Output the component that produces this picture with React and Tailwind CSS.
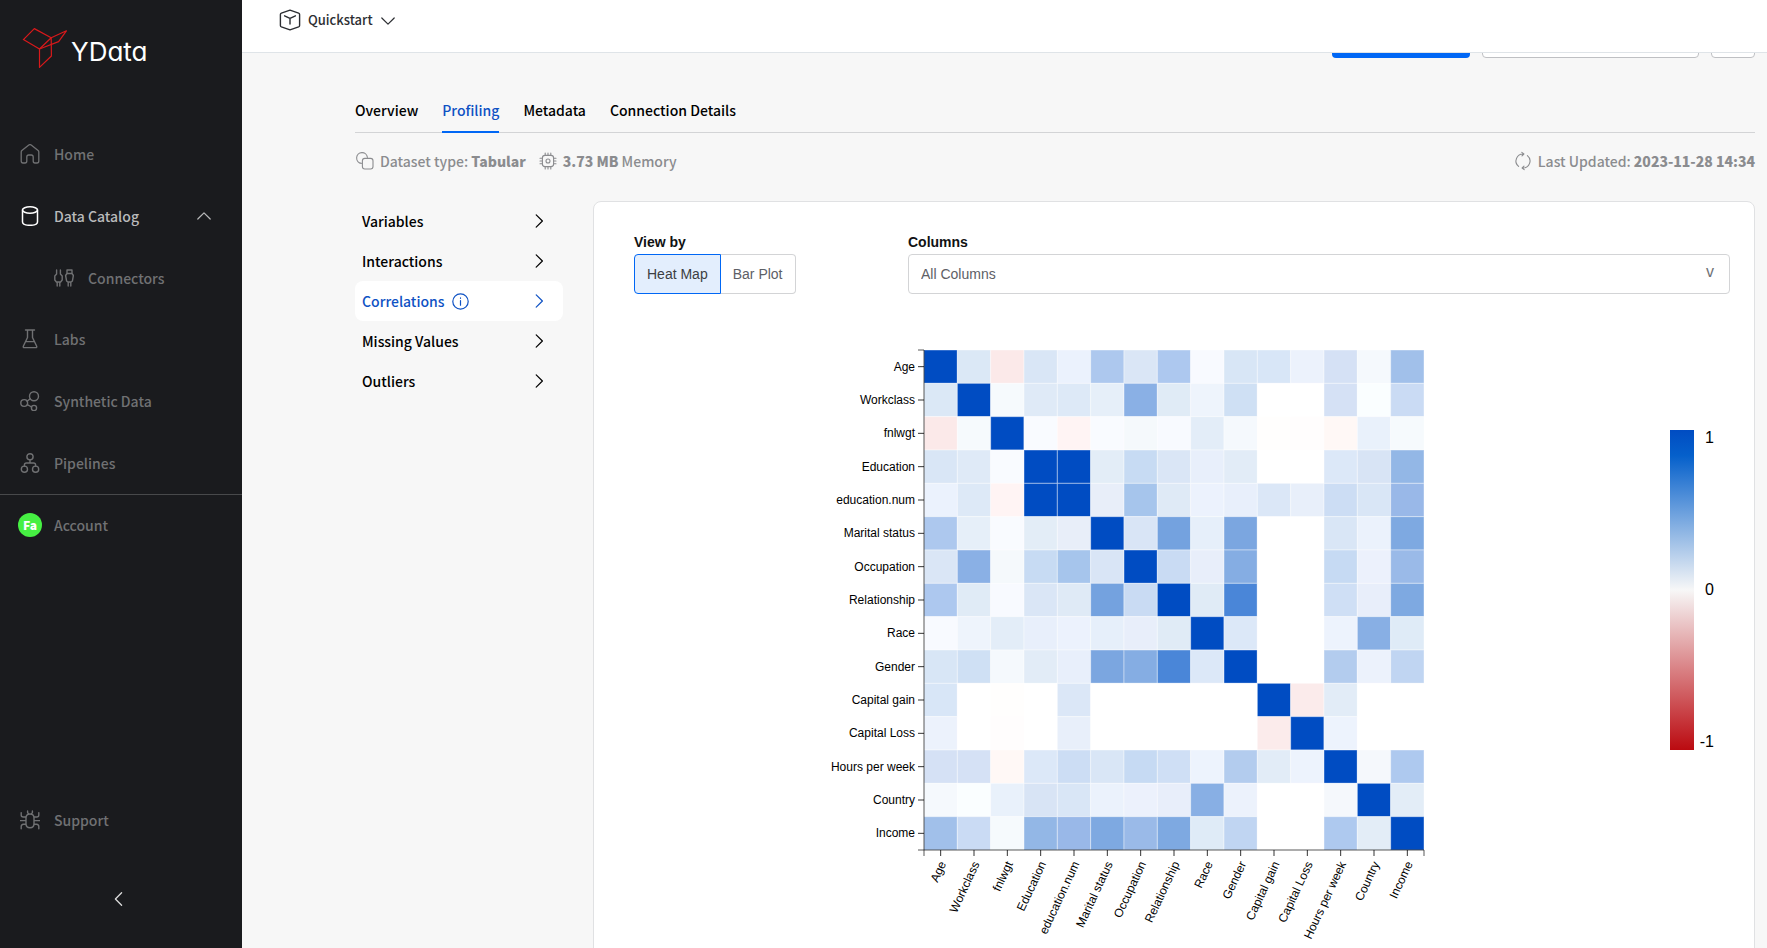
import React from "react";

const LABELS = [
  "Age", "Workclass", "fnlwgt", "Education", "education.num", "Marital status", "Occupation",
  "Relationship", "Race", "Gender", "Capital gain", "Capital Loss", "Hours per week", "Country", "Income",
];

// Upper triangle of the symmetric matrix: row i lists the cells right of the diagonal.
const UPPER = [
  ["dbe8f6", "fbe9e9", "d9e6f6", "ebf2fd", "adc8ee", "dae6f6", "adc8ef", "f8faff", "d8e6f6", "d8e6f7", "ecf2fc", "d5e1f5", "f5f9fd", "a1c0ea"],
  ["f6fafd", "dfeaf7", "dde9f7", "e6eff9", "8ab0e5", "e0ebf6", "eef4fc", "cfe0f4", "ffffff", "ffffff", "d5e1f5", "fafeff", "cadbf4"],
  ["f9fbff", "fff4f4", "f9fbff", "f5f9fc", "f8faff", "e3edf8", "f5f9fd", "fffefd", "fffdfd", "fff8f6", "e9f1fb", "f6fafd"],
  ["004cc2", "e3edf7", "c7dbf3", "dae6f6", "e8effb", "e2ecf7", "ffffff", "ffffff", "dce8f8", "d8e4f5", "93b7e6"],
  ["e8eef9", "a6c5ec", "dfeaf6", "ecf2fd", "e8effb", "dbe7f7", "e8effa", "ccddf4", "d9e6f6", "99b8e8"],
  ["d9e5f6", "74a2df", "e6effa", "7ba6e0", "ffffff", "ffffff", "d9e6f6", "ebf2fc", "7ea9e1"],
  ["c9dbf3", "e8eefa", "85ade3", "ffffff", "ffffff", "c6daf3", "ecf1fc", "9abae8"],
  ["e0ebf6", "4a86d8", "ffffff", "ffffff", "cfdff5", "e8eefa", "7ea9e1"],
  ["dce8f8", "ffffff", "ffffff", "edf3fd", "88afe4", "dfebf7"],
  ["ffffff", "ffffff", "b3ccee", "ecf2fc", "c0d5f2"],
  ["fbebeb", "e2ecf7", "ffffff", "ffffff"],
  ["edf3fd", "ffffff", "ffffff"],
  ["f5f8fc", "aec9ef"],
  ["e3edf7"],
];

function cellColor(r, c) {
  if (r === c) return "#004cc2";
  const a = Math.min(r, c);
  const b = Math.max(r, c);
  return "#" + UPPER[a][b - a - 1];
}

function Icon({ size = 20, box = 20, stroke = 1.2, className = "", children }) {
  return (
    <svg
      width={size}
      height={size}
      viewBox={`0 0 ${box} ${box}`}
      fill="none"
      stroke="currentColor"
      strokeWidth={stroke}
      strokeLinecap="round"
      strokeLinejoin="round"
      className={"shrink-0 " + className}
      aria-hidden="true"
    >
      {children}
    </svg>
  );
}

const HomeIcon = () => (
  <Icon stroke={1.3}>
    <path d="M1.2 8 Q1.2 7.2 1.9 6.6 L8.8 1 Q10 .2 11.2 1 L18.1 6.6 Q18.8 7.2 18.8 8 V17 Q18.8 19 17 19 H15 Q13.2 19 13.2 17 V13 Q13.2 11 11.2 11 H8.8 Q6.8 11 6.8 13 V17 Q6.8 19 5 19 H3 Q1.2 19 1.2 17 Z" />
  </Icon>
);
const DatabaseIcon = () => (
  <Icon stroke={1.5}>
    <ellipse cx="10" cy="4" rx="7.5" ry="3.2" />
    <path d="M2.5 4 V16 C2.5 20.4 17.5 20.4 17.5 16 V4" />
  </Icon>
);
const ConnectorsIcon = () => (
  <Icon stroke={1.4}>
    <path d="M2.6 2 V6 L.8 8 V12 L2.4 14 H6.6 L8.2 12 V8 L6.4 6 V2 M3.2 14 V18 M5.8 14 V18" />
    <path d="M13 2 H18 V5.5 H13 Z M13 5.5 L11.6 7.5 L12.6 13 L13.8 14 H17.2 L18.4 13 L19.4 7.5 L18 5.5 M14.2 14 V18 M16.8 14 V18" />
  </Icon>
);
const FlaskIcon = () => (
  <Icon stroke={1.4}>
    <path d="M5.5 1 H14.5 M7.5 1 V8.5 L3.3 17.2 Q3 18.6 4.2 18.6 H15.8 Q17 18.6 16.7 17.2 L12.5 8.5 V1 M5.8 12.6 H14.2" />
  </Icon>
);
const ShareIcon = () => (
  <Icon stroke={1.4}>
    <circle cx="14" cy="5.2" r="4.5" />
    <circle cx="4.2" cy="12" r="3.4" />
    <circle cx="14" cy="17" r="2.6" />
    <path d="M7.1 10.2 L10.2 7.7 M7.3 13.6 L11.6 16" />
  </Icon>
);
const PipelineIcon = () => (
  <Icon stroke={1.4}>
    <circle cx="10" cy="3.8" r="3.1" />
    <circle cx="4.4" cy="16.2" r="3.1" />
    <circle cx="15.6" cy="16.2" r="3.1" />
    <path d="M10 6.9 V10 M4.4 13 V12 Q4.4 10 6.4 10 H13.6 Q15.6 10 15.6 12 V13" />
  </Icon>
);
const BugIcon = () => (
  <Icon stroke={1.4}>
    <path d="M6 8 Q6 4 10 4 Q14 4 14 8 V13.5 Q14 17.8 10 17.8 Q6 17.8 6 13.5 Z M7.6 1 V2.6 L8.6 4 M12.4 1 V2.6 L11.4 4 M1.2 2.6 V5 Q1.2 7 3.2 7 H6 M18.8 2.6 V5 Q18.8 7 16.8 7 H14 M.4 10.6 H6 M14 10.6 H19.6 M1.2 18.8 V16.6 Q1.2 14.4 3.4 14.2 H6 M18.8 18.8 V16.6 Q18.8 14.4 16.6 14.2 H14" />
  </Icon>
);

const NAV = [
  { label: "Home", icon: HomeIcon },
  { label: "Data Catalog", icon: DatabaseIcon, active: true },
  { label: "Connectors", icon: ConnectorsIcon, sub: true },
  { label: "Labs", icon: FlaskIcon },
  { label: "Synthetic Data", icon: ShareIcon },
  { label: "Pipelines", icon: PipelineIcon },
];

function NavItem({ label, icon: Glyph, active, sub }) {
  return (
    <a
      href="#"
      className={
        "flex flex-1 items-center pr-[30px] " +
        (sub ? "gap-3 pl-[52px] " : "gap-3 pl-[18px] ") +
        (active ? "text-[#b9babb]" : "text-[#707173]")
      }
    >
      <span className={"flex w-6 justify-center " + (active ? "text-white" : "")}>
        <Glyph />
      </span>
      <span className="flex-1">{label}</span>
      {active && (
        <Icon size={16} box={16} stroke={1.2}>
          <path d="M1.8 11 L8 4.8 L14.2 11" />
        </Icon>
      )}
    </a>
  );
}

function Sidebar() {
  return (
    <aside className="flex w-[242px] shrink-0 flex-col bg-[#1a1b1e] text-sm font-medium">
      <div className="flex h-[123px] shrink-0 gap-1 pt-[26px] pl-[22px]">
        <svg width="45" height="44" viewBox="22 26 45 44" fill="none" stroke="#d8191b" strokeWidth="1.2" strokeLinejoin="round" aria-hidden="true">
          <path d="M34.3 28.6 L51.2 37.8 L66.4 30.8 L58.6 41.6 L39.5 49 L23.4 39.6 Z" />
          <path d="M51.2 37.8 L39.5 49 V67.4 L51.4 56 Z" />
        </svg>
        <span className="pt-2 text-[26px] leading-[36px] font-normal text-white font-[Inter,sans-serif] [font-feature-settings:'cv11']">
          YData
        </span>
      </div>
      <nav className="flex h-[371px] shrink-0 flex-col">
        {NAV.map((item) => (
          <NavItem key={item.label} {...item} />
        ))}
      </nav>
      <a href="#" className="flex h-[61px] shrink-0 items-center gap-3 border-t border-[#48494b] pl-[18px] text-[#707173]">
        <span className="flex size-6 items-center justify-center rounded-full bg-[#46f043] text-xs font-black text-white">Fa</span>
        Account
      </a>
      <div className="mt-auto flex h-[61px] shrink-0">
        <NavItem label="Support" icon={BugIcon} />
      </div>
      <button type="button" aria-label="Collapse sidebar" className="flex h-[98px] shrink-0 items-center pl-[111px] text-[#dcdcdc]">
        <Icon size={16} box={16} stroke={1.3}>
          <path d="M10.6 1.8 L4.4 8 L10.6 14.2" />
        </Icon>
      </button>
    </aside>
  );
}

function TopBar() {
  return (
    <header className="flex h-[53px] shrink-0 items-start border-b border-[#dfe4e8] bg-white pt-[10px] pl-[37px]">
      <button type="button" className="flex h-5 items-center gap-[7px] text-[13px] font-medium text-[#2c2e32]">
        <Icon size={22} box={22} stroke={1.4}>
          <path d="M11 1.2 L19.6 4.2 Q20.6 4.6 20.6 5.6 V16.4 Q20.6 17.4 19.6 17.8 L11 20.8 L2.4 17.8 Q1.4 17.4 1.4 16.4 V5.6 Q1.4 4.6 2.4 4.2 Z" />
          <path d="M5.6 6.8 L11 9.4 L16.4 6.8 M11 9.4 V15" />
        </Icon>
        Quickstart
        <Icon size={16} box={16} stroke={1.2}>
          <path d="M1.8 6 L8 12.2 L14.2 6" />
        </Icon>
      </button>
    </header>
  );
}

const TABS = ["Overview", "Profiling", "Metadata", "Connection Details"];

function Tabs() {
  return (
    <nav className="flex gap-6 border-b border-[#d3d4d6]">
      {TABS.map((t) => (
        <a
          key={t}
          href="#"
          className={
            "-mb-px flex h-11 items-center border-b-2 text-sm font-medium " +
            (t === "Profiling" ? "border-[#0067f5] text-[#0f52c4]" : "border-transparent text-black")
          }
        >
          {t}
        </a>
      ))}
    </nav>
  );
}

function MetaRow() {
  return (
    <div className="flex h-14 items-center text-sm font-medium text-[#8b8c8f]">
      <Icon stroke={1.1} className="mr-[5px]">
        <path d="M6.4 12.4 A5.4 5.4 0 1 1 12.4 6.4" />
        <rect x="7.4" y="7.4" width="10.6" height="10.6" rx="2.4" />
      </Icon>
      <span>
        Dataset type: <b className="font-black">Tabular</b>
      </span>
      <Icon stroke={1.1} className="mr-[5px] ml-3">
        <rect x="4.4" y="4.4" width="11.2" height="11.2" rx="2.6" />
        <circle cx="10" cy="10" r="2" />
        <path d="M7.2 2 V4.4 M10 2 V4.4 M12.8 2 V4.4 M7.2 15.6 V18 M10 15.6 V18 M12.8 15.6 V18 M2 7.2 H4.4 M2 10 H4.4 M2 12.8 H4.4 M15.6 7.2 H18 M15.6 10 H18 M15.6 12.8 H18" />
      </Icon>
      <span>
        <b className="font-black">3.73 MB</b> Memory
      </span>
      <span className="ml-auto flex items-center gap-[5px]">
        <Icon stroke={1.1}>
          <path d="M10.6 3 A7 7 0 0 0 5.6 15.4 M8.8 1.4 L10.9 3 L9 4.8" />
          <path d="M9.4 17 A7 7 0 0 0 14.4 4.6 M11.2 18.6 L9.1 17 L11 15.2" />
        </Icon>
        <span>
          Last Updated: <b className="font-black">2023-11-28 14:34</b>
        </span>
      </span>
    </div>
  );
}

const SECTIONS = ["Variables", "Interactions", "Correlations", "Missing Values", "Outliers"];

function SectionNav() {
  return (
    <nav className="flex w-[208px] shrink-0 flex-col text-sm font-medium">
      {SECTIONS.map((s) => (
        <a
          key={s}
          href="#"
          className={
            "flex h-10 items-center gap-[7px] rounded-lg pr-4 pl-[7px] " +
            (s === "Correlations" ? "bg-white text-[#0f52c4]" : "text-black")
          }
        >
          {s}
          {s === "Correlations" && (
            <Icon size={17} box={17} stroke={1.2}>
              <circle cx="8.5" cy="8.5" r="7.7" />
              <path d="M8.5 7.6 V12.2 M8.5 4.9 V5.3" />
            </Icon>
          )}
          <Icon size={16} box={16} stroke={1.2} className="ml-auto">
            <path d="M5.2 1.8 L11.4 8 L5.2 14.2" />
          </Icon>
        </a>
      ))}
    </nav>
  );
}

function HeatMap() {
  const step = 500 / LABELS.length;
  const ox = 110;
  const oy = 10;
  return (
    <svg width="720" height="600" viewBox="0 0 720 600" role="img" aria-label="Correlation heat map" className="font-['Liberation_Sans',Arial,sans-serif] text-xs">
      <g transform={`translate(${ox} ${oy})`}>
        {LABELS.map((_, r) =>
          LABELS.map((__, c) => (
            <rect key={r + "-" + c} x={c * step} y={r * step} width={step} height={step} fill={cellColor(r, c)} stroke="#ffffff" strokeOpacity="0.4" strokeWidth="1" />
          ))
        )}
        <g stroke="#000000" strokeOpacity="0.65" fill="none">
          <path d="M-6 0 H0 V500 H-6" />
          <path d="M0 506 V500 H500 V506" />
        </g>
        {LABELS.map((l, i) => {
          const p = (i + 0.5) * step;
          return (
            <g key={l}>
              <line x1="-6" x2="0" y1={p} y2={p} stroke="#000000" strokeOpacity="0.8" />
              <line y1="500" y2="506" x1={p} x2={p} stroke="#000000" strokeOpacity="0.8" />
              <text x="-9" y={p} dy="0.32em" textAnchor="end">{l}</text>
              <text transform={`translate(${p} 500) rotate(-65)`} x="-10" y="11" textAnchor="end">{l}</text>
            </g>
          );
        })}
      </g>
    </svg>
  );
}

function Legend() {
  return (
    <div className="mt-[90px] flex h-80 justify-end gap-1.5 text-base leading-4 text-black">
      <div className="w-6 bg-[linear-gradient(to_bottom,#004cc2_0%,#0560cb_8%,#f7f7f7_50%,#bb0a10_100%)]" />
      <div className="flex w-[14px] flex-col items-end justify-between">
        <span>1</span>
        <span>0</span>
        <span>-1</span>
      </div>
    </div>
  );
}

function Card() {
  return (
    <section className="min-w-0 flex-1 rounded-lg border border-[#e0e1e3] bg-white font-['Liberation_Sans',Arial,sans-serif] text-sm">
      <div className="flex pt-[30px] pr-6 pl-10">
        <fieldset className="w-[274px] shrink-0">
          <legend className="h-[22px] leading-5 font-bold text-[#111213]">View by</legend>
          <div className="flex">
            <button type="button" className="h-10 rounded-l border border-[#0067f5] bg-[#e3eefd] px-3 text-[#3c3e42]">Heat Map</button>
            <button type="button" className="h-10 rounded-r border border-l-0 border-[#d3d4d6] px-3 text-[#5d6066]">Bar Plot</button>
          </div>
        </fieldset>
        <div className="min-w-0 flex-1">
          <label htmlFor="columns" className="block h-[22px] leading-5 font-bold text-[#111213]">Columns</label>
          <div className="relative">
            <select id="columns" className="h-10 w-full appearance-none rounded border border-[#d3d4d6] bg-white px-3 text-[#5d6066]">
              <option>All Columns</option>
            </select>
            <span aria-hidden="true" className="pointer-events-none absolute inset-y-0 right-4 flex items-center pb-1 text-base text-[#6f7277]">v</span>
          </div>
        </div>
      </div>
      <div className="grid grid-cols-[1fr_auto_1fr] px-10 pt-[46px] pb-10">
        <div />
        <HeatMap />
        <Legend />
      </div>
    </section>
  );
}

export default function App() {
  return (
    <div className="flex h-screen overflow-hidden bg-[#f7f7f7] font-['Noto_Sans_CJK_SC','Open_Sans',sans-serif]">
      <Sidebar />
      <div className="flex min-w-0 flex-1 flex-col">
        <TopBar />
        <main className="min-h-0 flex-1 overflow-hidden pr-3 pl-[113px]">
          <div className="flex h-[5px] items-end justify-end gap-3 overflow-hidden">
            <button type="button" aria-label="Create" className="h-10 w-[138px] shrink-0 rounded bg-[#0067f5]" />
            <button type="button" aria-label="Open in Labs" className="h-10 w-[217px] shrink-0 rounded border border-[#bfc0c3] bg-white" />
            <button type="button" aria-label="More" className="h-10 w-11 shrink-0 rounded border border-[#bfc0c3] bg-white" />
          </div>
          <div className="pt-[31px]">
            <Tabs />
            <MetaRow />
          </div>
          <div className="flex gap-[30px] pt-3">
            <SectionNav />
            <Card />
          </div>
        </main>
      </div>
    </div>
  );
}
